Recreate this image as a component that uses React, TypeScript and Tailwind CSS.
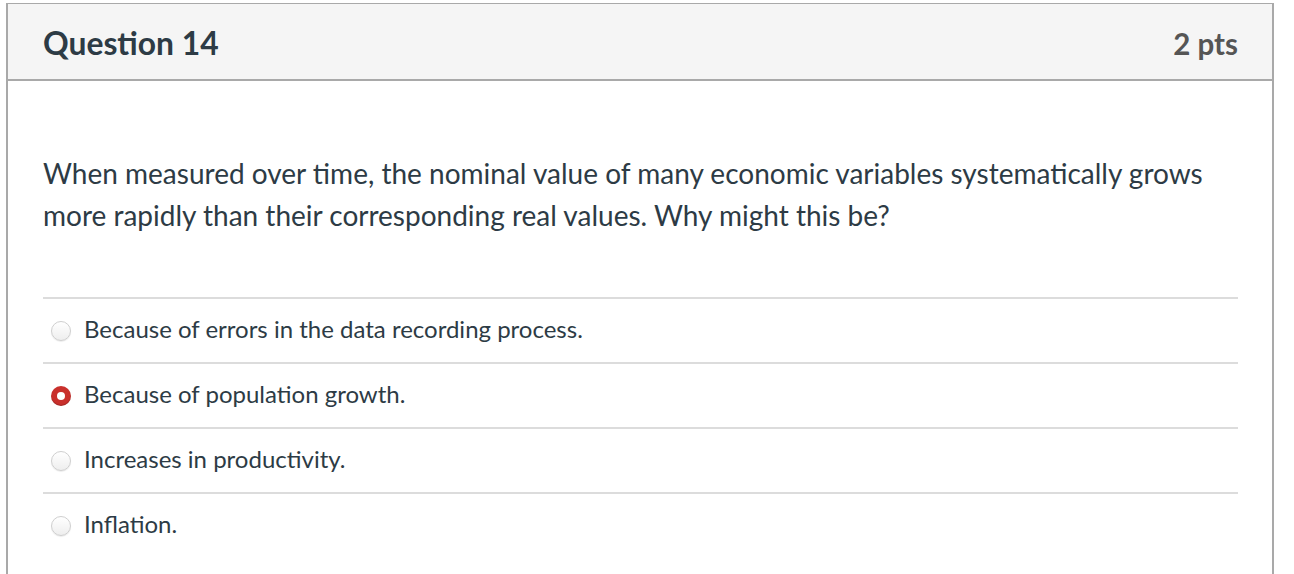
import React from "react";

const options = [
  { text: "Because of errors in the data recording process.", selected: false },
  { text: "Because of population growth.", selected: true },
  { text: "Increases in productivity.", selected: false },
  { text: "Inflation.", selected: false },
];

function Radio({ selected }: { selected: boolean }) {
  if (selected) {
    return (
      <span className="flex h-[20px] w-[20px] shrink-0 items-center justify-center rounded-full bg-[#c9302c] shadow-[inset_0_-1px_1px_rgba(0,0,0,0.2)]">
        <span className="h-[8px] w-[8px] rounded-full bg-white" />
      </span>
    );
  }
  return (
    <span className="h-[20px] w-[20px] shrink-0 rounded-full border border-[#cfcfcf] bg-gradient-to-b from-white to-[#eeeeee] shadow-[0_1px_1px_rgba(0,0,0,0.08)]" />
  );
}

export default function App() {
  return (
    <div className="h-[574px] w-[1294px] overflow-hidden bg-white pl-[6px] pt-[3px]" style={{ fontFamily: "Lato, 'Open Sans', sans-serif" }}>
      <div className="w-[1268px] border-x-2 border-t-[1px] border-[#a9a9a9] h-[600px]">
        <div className="flex h-[77px] items-center justify-between border-b-2 border-[#a9a9a9] bg-[#f5f5f5] pl-[35px] pr-[34px] pt-[4px]">
          <h2 className="text-[31.8px] font-bold leading-none text-[#2d3b45]">Question 14</h2>
          <span className="text-[29.5px] font-bold leading-none text-[#555555]">2 pts</span>
        </div>
        <div className="px-[35px] pt-[71px]">
          <p className="text-[28px] leading-[42px] text-[#2d3b45]">
            When measured over time, the nominal value of many economic variables systematically grows more rapidly than their corresponding real values. Why might this be?
          </p>
          <div className="mt-[61px] w-[1195px]">
            {options.map((o) => (
              <div key={o.text} className="flex h-[65px] items-center gap-[13px] border-t-2 border-[#dcdcdc] pl-[8px]">
                <Radio selected={o.selected} />
                <span className="pb-[4px] text-[24px] leading-none text-[#2d3b45]">{o.text}</span>
              </div>
            ))}
          </div>
        </div>
      </div>
    </div>
  );
}
